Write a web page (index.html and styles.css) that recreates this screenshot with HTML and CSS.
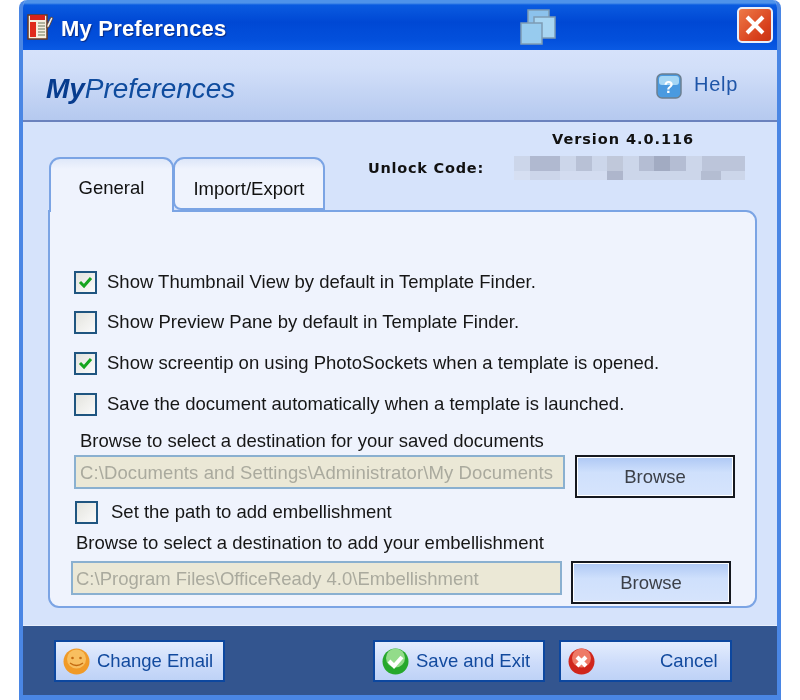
FILE: index.html
```html
<!DOCTYPE html>
<html lang="en">
<head>
<meta charset="utf-8">
<title>My Preferences</title>
<link rel="stylesheet" href="styles.css">
</head>
<body>
<div class="window">
  <div class="titlebar">
    <svg class="app-icon" width="27" height="28" viewBox="0 0 27 28">
      <rect x="1" y="2" width="19" height="24" fill="#f6efe0" stroke="#6b3a20" stroke-width="1.5"/>
      <rect x="3" y="2" width="15" height="5" fill="#d8231a"/>
      <rect x="3" y="9" width="6" height="15" fill="#e02a1c"/>
      <path d="M11 10h7M11 13h7M11 16h7M11 19h7M11 22h7" stroke="#9aa088" stroke-width="1.6"/>
      <path d="M20 12l4-8 2 1-4 9-2 1z" fill="#f2f2f2" stroke="#5a3a20" stroke-width=".8"/>
    </svg>
    <span class="title-text">My Preferences</span>
    <svg class="stack-icon" width="36" height="36" viewBox="0 0 36 36">
      <rect x="8" y="1" width="21" height="21" fill="#8cc2ec" stroke="#7d9cb4" stroke-width="1.5"/>
      <rect x="14" y="8" width="21" height="21" fill="#a8d6f2" stroke="#7d9cb4" stroke-width="1.5"/>
      <rect x="1" y="14" width="21" height="21" fill="#97cbee" stroke="#7d9cb4" stroke-width="1.5"/>
    </svg>
    <div class="close-btn">
      <svg width="22" height="22" viewBox="0 0 22 22"><path d="M3 3l16 16M19 3L3 19" stroke="#fff" stroke-width="4"/></svg>
    </div>
  </div>
  <div class="header">
    <div class="logo"><b>My</b>Preferences</div>
    <div class="help">
      <svg width="26" height="26" viewBox="0 0 26 26">
        <rect x="1" y="1" width="24" height="24" rx="5" fill="#4a9ae0" stroke="#6c7f90" stroke-width="1.5"/>
        <rect x="3" y="3" width="20" height="9" rx="3" fill="#a5d6f5"/>
        <text x="13" y="20" text-anchor="middle" class="help-mark">?</text>
      </svg>
      <span>Help</span>
    </div>
  </div>
  <div class="main">
    <div class="top-row">
      <div class="tabs">
        <div class="tab tab-active">General</div>
        <div class="tab tab-other">Import/Export</div>
      </div>
      <div class="info">
        <div class="version">Version 4.0.116</div>
        <div class="code-row">
          <span>Unlock Code:</span>
          <svg class="pixels" width="231" height="24" viewBox="0 0 231 24" shape-rendering="crispEdges">
            <rect width="231" height="24" fill="#ccd6ea"/>
            <rect x="16" y="0" width="30" height="15" fill="#b0b9d0"/>
            <rect x="62" y="0" width="16" height="15" fill="#b8c1d6"/>
            <rect x="125" y="0" width="47" height="15" fill="#b4bdd3"/>
            <rect x="140" y="0" width="16" height="15" fill="#a2abc2"/>
            <rect x="93" y="0" width="16" height="24" fill="#c0c8da"/>
            <rect x="93" y="15" width="16" height="9" fill="#aeb6cc"/>
            <rect x="188" y="0" width="43" height="15" fill="#bcc5da"/>
            <rect x="187" y="15" width="20" height="9" fill="#b4bdd2"/>
            <rect x="0" y="15" width="16" height="9" fill="#d6dff2"/>
            <rect x="46" y="15" width="47" height="9" fill="#d3dcf0"/>
          </svg>
        </div>
      </div>
    </div>
    <div class="panel">
      <label class="check-row row-1"><span class="box checked"><svg width="15" height="13" viewBox="0 0 15 13"><path d="M2 6l4 4 7-8" fill="none" stroke="#16a51e" stroke-width="3"/></svg></span>Show Thumbnail View by default in Template Finder.</label>
      <label class="check-row row-2"><span class="box"></span>Show Preview Pane by default in Template Finder.</label>
      <label class="check-row row-3"><span class="box checked"><svg width="15" height="13" viewBox="0 0 15 13"><path d="M2 6l4 4 7-8" fill="none" stroke="#16a51e" stroke-width="3"/></svg></span>Show screentip on using PhotoSockets when a template is opened.</label>
      <label class="check-row row-4"><span class="box"></span>Save the document automatically when a template is launched.</label>
      <div class="caption cap-1">Browse to select a destination for your saved documents</div>
      <div class="path-row path-1">
        <div class="path-input">C:\Documents and Settings\Administrator\My Documents</div>
        <div class="browse">Browse</div>
      </div>
      <label class="check-row row-5"><span class="box"></span>Set the path to add embellishment</label>
      <div class="caption cap-2">Browse to select a destination to add your embellishment</div>
      <div class="path-row path-2">
        <div class="path-input">C:\Program Files\OfficeReady 4.0\Embellishment</div>
        <div class="browse">Browse</div>
      </div>
    </div>
  </div>
  <div class="footer">
    <div class="action action-email">
      <svg width="27" height="27" viewBox="0 0 27 27">
        <circle cx="13.5" cy="13.5" r="13" fill="#f09a28"/>
        <circle cx="13.5" cy="11" r="9.5" fill="#f8bf60"/>
        <circle cx="9.5" cy="10" r="1.3" fill="#c46a10"/>
        <circle cx="17.5" cy="10" r="1.3" fill="#c46a10"/>
        <path d="M7 15q6.500 5 13 0" fill="none" stroke="#c46a10" stroke-width="1.3"/>
      </svg>
      <span>Change Email</span>
    </div>
    <div class="action action-save">
      <svg width="27" height="27" viewBox="0 0 27 27">
        <circle cx="13.500" cy="13.500" r="13" fill="#27a82c"/>
        <circle cx="13.500" cy="10" r="9.500" fill="#93dc8a"/>
        <path d="M7 13l5 5 8-9" fill="none" stroke="#fff" stroke-width="4"/>
      </svg>
      <span>Save and Exit</span>
    </div>
    <div class="action action-cancel">
      <svg width="27" height="27" viewBox="0 0 27 27">
        <circle cx="13.500" cy="13.500" r="13" fill="#d0261c"/>
        <circle cx="13.500" cy="10" r="9.500" fill="#ee7a66"/>
        <path d="M9 9l9 9M18 9l-9 9" stroke="#fff" stroke-width="4"/>
      </svg>
      <span>Cancel</span>
    </div>
  </div>
</div>
</body>
</html>
```
FILE: styles.css
```css
* { box-sizing: border-box; }
html, body { margin: 0; height: 100%; background: #fff; }
body { width: 800px; height: 700px; overflow: hidden; padding-left: 19px; font-family: "Liberation Sans", Arial, sans-serif; }
.window {
  width: 762px; height: 700px; display: flex; flex-direction: column;
  background: #d6e3fb; border: solid #4a86e4; border-width: 0 4px 5px 4px;
  border-radius: 8px 8px 0 0; filter: blur(.45px); overflow: hidden;
}
.titlebar {
  height: 50px; flex: none; display: flex; align-items: center; padding: 4px 4px 0 4px;
  background: linear-gradient(#4f93ea 0, #4f93ea 3px, #0a5be0 5px, #0048d4 22px, #0350dc 40px, #0a5ae4 50px);
}
.app-icon { flex: none; }
.title-text {
  margin-left: 7px; width: 464px; color: #fff; font: bold 22px "Liberation Sans", sans-serif; letter-spacing: .2px;
  text-shadow: 1px 1px 1px #0a2a80; margin-top: 3px;
}
.stack-icon { flex: none; }
.close-btn {
  margin-left: 181px; width: 36px; height: 36px; flex: none; display: flex; align-items: center; justify-content: center;
  margin-top: -4px; border: 2px solid #e8eefa; border-radius: 5px; background: linear-gradient(135deg, #ee7a48, #d8401c 70%, #c83414);
}
.header {
  height: 72px; flex: none; display: flex; align-items: center; justify-content: space-between; padding: 0 39px 2px 23px;
  background: linear-gradient(#d6e2fb, #d2dff9 25%, #b5c9ef); border-bottom: 2px solid #6b82bd;
}
.logo { color: #0f4c9e; font: italic 28px "Liberation Sans", sans-serif; letter-spacing: -.05px; margin-top: 10px; }
.logo b { color: #073c8e; font-weight: bold; }
.help { display: flex; align-items: center; gap: 12px; color: #1e55a8; font: 20px "Liberation Sans", sans-serif; letter-spacing: .7px; margin-top: 3px; }
.help span { margin-top: -3px; }
.help-mark { fill: #fff; font: bold 16px "Liberation Sans", sans-serif; }
.main { height: 503px; flex: none; display: flex; flex-direction: column; padding: 0 20px 0 25px; }
.top-row { height: 88px; flex: none; display: flex; position: relative; z-index: 1; }
.tabs { display: flex; align-items: flex-end; padding-left: 1px; }
.tab {
  height: 53px; display: flex; align-items: center; justify-content: center; font-size: 18.5px; color: #111;
  border: solid #7ba4e4; border-width: 2px 2px 0 2px; border-radius: 11px 11px 0 0;
  background: linear-gradient(#dde6f8, #eff3fd 10px);
}
.tab-active { width: 125px; height: 55px; margin-bottom: -2px; background: linear-gradient(#dfe8f9, #eff3fd 10px); padding-top: 4px; }
.tab-other { width: 152px; padding-top: 10px; border-bottom: 2px solid #7ba4e4; border-radius: 11px 11px 0 8px; margin-left: -1px; }
.info { padding: 8px 0 0 43px; flex: 1; color: #111; font: bold 15px "DejaVu Sans", sans-serif; }
.version { padding-left: 184px; height: 24px; font-size: 14.5px; line-height: 18px; letter-spacing: .95px; }
.code-row { display: flex; align-items: center; gap: 30px; margin-top: 2px; font-size: 14.5px; letter-spacing: .75px; }
.pixels { flex: none; filter: blur(.6px); }
.panel {
  height: 398px; flex: none; display: flex; flex-direction: column; padding: 0 0 0 24px;
  background: #eff3fd; border: 2px solid #7ba4e4; border-radius: 0 11px 11px 11px; color: #111; font-size: 18.5px;
}
.check-row { display: flex; align-items: center; gap: 10px; height: 24px; color: #161616; }
.box {
  width: 23px; height: 23px; flex: none; display: flex; align-items: center; justify-content: center;
  border: 2px solid #1f5580; background: linear-gradient(135deg, #e4e4de, #fafafa);
}
.row-1 { margin-top: 58px; }
.row-2 { margin-top: 16px; }
.row-3 { margin-top: 17px; }
.row-4 { margin-top: 17px; }
.row-5 { margin-top: 2px; gap: 13px; margin-left: 1px; }
.caption { height: 24px; line-height: 24px; color: #161616; }
.cap-1 { margin: 13px 0 0 6px; }
.cap-2 { margin: 7px 0 0 2px; }
.path-row { display: flex; gap: 10px; align-items: flex-start; }
.path-1 { margin-top: 2px; height: 43px; }
.path-2 { margin: 6px 0 0 -3px; height: 43px; gap: 9px; }
.path-input {
  width: 491px; height: 34px; padding-left: 4px; line-height: 31px; font-size: 18.5px; color: #aaaa9e;
  background: #ebe8d6; border: 2px solid #8ab0d0; white-space: nowrap; overflow: hidden;
}
.path-1 .path-input { letter-spacing: .1px; }
.path-2 .path-input { padding-left: 3px; }
.browse {
  width: 160px; height: 43px; display: flex; align-items: center; justify-content: center; color: #3c4048; font-size: 18.5px;
  border: 2px solid #15181f; outline: 1px solid #fff; outline-offset: -3px; background: linear-gradient(#aec8f4, #cfe0fc 40%, #d6e4fc);
}
.footer { height: 70px; flex: none; display: flex; align-items: flex-start; padding: 14px 0 0 31px; background: #33558f; border-top: 1px solid #e8effc; }
.action {
  height: 42px; display: flex; align-items: center; color: #124a9e; font-size: 18.5px; padding-left: 7px; white-space: nowrap;
  border: 2px solid #0c479f; background: linear-gradient(#e4edfd, #cddcfa 55%, #bed2f6);
}
.action-email { width: 171px; gap: 7px; }
.action-save { width: 172px; margin-left: 148px; gap: 7px; }
.action-cancel { width: 173px; margin-left: 14px; gap: 65px; }
```
